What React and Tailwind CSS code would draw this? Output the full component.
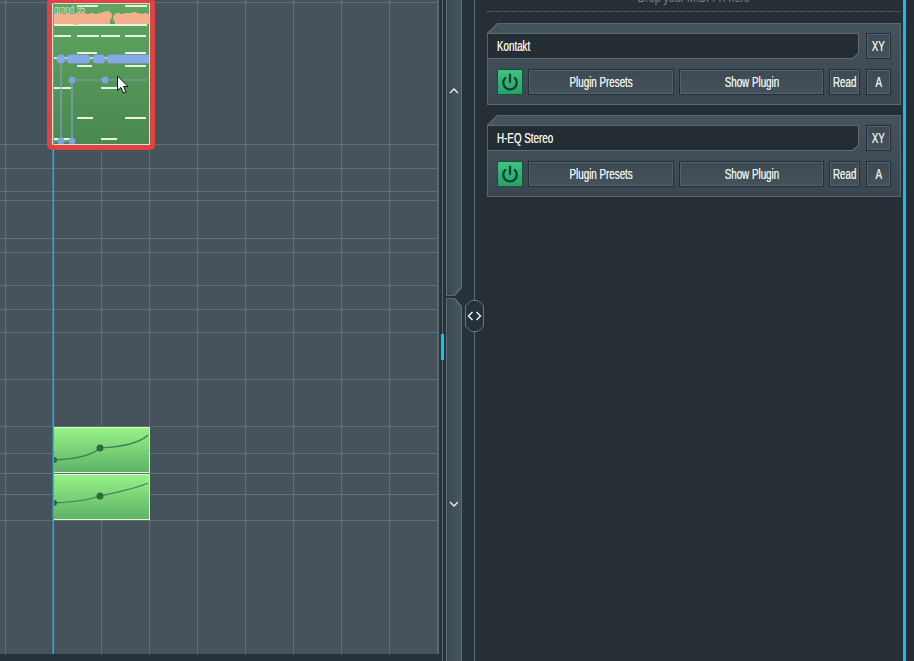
import React from 'react';
import { Power } from 'lucide-react';

const vLines = [5, 101, 149, 197, 245, 293, 341, 389];
const hLines = [2, 144, 168, 191, 200, 238, 252, 285, 309, 332, 379, 426, 453, 473, 494, 520];

const notes = [
  [24, 45, 1], [72, 94, 1], [1, 94, 20], [1, 18, 31], [24, 46, 31], [48, 67, 31], [72, 93, 31],
  [24, 44, 48], [72, 93, 48], [24, 39, 61], [72, 93, 61], [1, 18, 83], [48, 64, 83],
  [24, 40, 113], [72, 93, 113], [1, 18, 134], [48, 64, 134],
];
const peachBlobs = [
  [3, 15, 5], [7, 14, 5], [11, 15, 5], [15, 14, 5], [19, 15, 5], [23, 15, 6], [27, 14, 5], [31, 14, 5], [35, 15, 5],
  [39, 14, 5], [43, 15, 5], [47, 14, 5], [51, 13, 5], [54, 12, 5], [65, 14, 5], [69, 15, 5], [73, 14, 5], [77, 14, 5],
  [81, 13, 5], [85, 14, 5], [89, 15, 5], [92, 14, 5],
];
const blueDots = [8, 18, 21, 25, 29, 33, 44, 48, 58, 62, 66, 70, 74, 78, 82, 86, 90, 94];

const GridLines = () => (
  <svg className="absolute inset-0" width="439" height="654">
    {vLines.map(x => <line key={x} x1={x + 0.5} y1="0" x2={x + 0.5} y2="654" stroke="#616e77" />)}
    {hLines.map(y => <line key={y} x1="0" y1={y + 0.5} x2="437" y2={y + 0.5} stroke="#616e77" />)}
  </svg>
);

const PatternClip = () => (
  <div className="absolute left-[47px] top-[-2px] h-[152px] w-[108px] rounded-[5px] border-[5px] border-[#e04343]">
    <div className="relative h-full w-full overflow-hidden border border-[#d5e6cf] bg-gradient-to-b from-[#5fa663] to-[#4a884f]">
      <svg className="absolute left-0 top-0" width="96" height="140">
        {notes.map(([a, b, y], i) => <rect key={i} x={a} y={y} width={b - a} height="2" fill="#e8f4e0" />)}
        <rect x="0" y="10" width="57" height="10" fill="#f4b08c" />
        <rect x="62" y="10" width="34" height="10" fill="#f4b08c" />
        {peachBlobs.map(([x, y, r]) => <circle key={x} cx={x} cy={y} r={r} fill="#f4b08c" />)}
        <rect x="1" y="53" width="94" height="2" fill="#d6e9d0" />
        <path d="M8 55V137M19 76V137" fill="none" stroke="#7fa4c9" strokeWidth="2" opacity="0.6" />
        <path d="M19 76H95" fill="none" stroke="#7fa4c9" strokeWidth="2" opacity="0.4" />
        <path d="M0 137H19" stroke="#7fa4c9" strokeWidth="2" opacity="0.6" />
        {blueDots.map(x => <circle key={x} cx={x} cy="55" r="4.5" fill="#86a9e8" />)}
        <circle cx="19" cy="76" r="3.5" fill="#7fa3dd" />
        <circle cx="52" cy="76" r="3.5" fill="#7fa3dd" />
        <circle cx="8" cy="137" r="3.5" fill="#7fa3dd" />
        <circle cx="19" cy="137" r="3.5" fill="#7fa3dd" />
      </svg>
      <span className="absolute left-[1px] top-0 inline-block origin-left scale-x-[0.72] whitespace-nowrap text-[11px] leading-[11px] text-[#c9e3c2]">grand 95</span>
    </div>
  </div>
);

const AutoClip = ({ top, d, dot, start }) => (
  <div className={`absolute left-[53px] h-[46px] w-[97px] border border-[#d9f5cf] bg-gradient-to-b from-[#97f287] to-[#5fb366] ${top}`}>
    <svg className="absolute left-0 top-0" width="95" height="44">
      <path d={d} fill="none" stroke="#3f8050" strokeWidth="1.3" />
      <circle cx="46" cy={dot} r="3.5" fill="#2f6a3e" />
      <circle cx="0" cy={start} r="3" fill="#2f6a3e" />
    </svg>
  </div>
);

const Narrow = ({ className = '', children }) => (
  <span className={`inline-block scale-x-[0.7] whitespace-nowrap [text-shadow:0_0_0.6px_#e8ece6] ${className}`}>{children}</span>
);

const Button = ({ className = '', children }) => (
  <button className={`flex h-[26px] items-center justify-center border border-[#262e35] bg-gradient-to-b from-[#3d4a53] to-[#45525b] text-[14px] text-[#e8ece6] shadow-[inset_0_0_0_1px_#55626b] ${className}`}>
    <Narrow>{children}</Narrow>
  </button>
);

const PluginCard = ({ name }) => (
  <div className="h-[82px] w-[414px] bg-[#5a6770] p-px [clip-path:polygon(10px_0,100%_0,100%_100%,0_100%,0_10px)]">
    <div className="h-full bg-gradient-to-b from-[#45535c] to-[#3b4750] pt-[9px] [clip-path:polygon(10px_0,100%_0,100%_100%,0_100%,0_10px)]">
      <div className="flex items-center">
        <div className="h-[26px] w-[371px] bg-[#5e6b73] py-px pr-px [clip-path:polygon(0_0,100%_0,100%_20px,calc(100%-6px)_100%,0_100%)]">
          <div className="flex h-full items-center bg-[#252d34] pl-[9px] text-[14px] text-[#ecefe8] [clip-path:polygon(0_0,100%_0,100%_19px,calc(100%-6px)_100%,0_100%)]">
            <Narrow className="origin-left">{name}</Narrow>
          </div>
        </div>
        <Button className="ml-[7px] w-[25px]">XY</Button>
      </div>
      <div className="mt-[10px] flex items-center pl-[9px]">
        <div className="flex h-[26px] w-[26px] items-center justify-center border border-[#1b4d3b] bg-gradient-to-b from-[#3bc583] to-[#27a06a]">
          <Power size={18} strokeWidth={3} color="#0f3d2a" />
        </div>
        <Button className="ml-[5px] w-[146px]">Plugin Presets</Button>
        <Button className="ml-[5px] w-[145px]">Show Plugin</Button>
        <Button className="ml-[5px] w-[31px]">Read</Button>
        <Button className="ml-[6px] w-[25px]">A</Button>
      </div>
    </div>
  </div>
);

const App = () => {
  return (
    <div className="flex h-[661px] w-[914px] overflow-hidden bg-[#27313a] font-['Liberation_Sans',sans-serif]">
      {/* arrangement canvas */}
      <div className="relative h-[654px] w-[439px] shrink-0 overflow-hidden border-r-2 border-[#5c6870] bg-[#46535c]">
        <GridLines />
        <PatternClip />
        <AutoClip top="top-[427px]" d="M0 32 C20 31 38 28 46 20 C65 19 85 16 94 7" dot="20" start="32" />
        <AutoClip top="top-[474px]" d="M0 28 C20 27 35 25 46 21 C65 17 80 14 94 8" dot="21" start="28" />
        <div className="absolute bottom-0 left-[53px] top-[150px] w-px bg-[#1fb6e0] shadow-[-1px_0_0_#2f7f9c]" />
        <div className="absolute left-[53px] top-[3px] h-[142px] w-px bg-[#1fb6e0]" />
        <svg className="absolute left-[116px] top-[75px]" width="14" height="20">
          <path d="M1.5 1V15.5L5 12.5L7.5 18L10 17L7.5 11.5H12Z" fill="#fff" stroke="#111" />
        </svg>
      </div>

      {/* scroll strip */}
      <div className="relative h-full w-[35px] shrink-0">
        <div className="absolute bottom-0 left-[3px] top-0 w-px bg-[#5c6870]" />
        <div className="absolute left-[2px] top-[334px] h-[26px] w-[3px] bg-[#12c4f2]" />
        <div className="absolute left-[7px] top-0 flex h-full w-[16px] flex-col gap-[2px]">
          <div className="relative h-[296px] bg-[#5f6c75] px-px pb-px [clip-path:polygon(0_0,100%_0,100%_calc(100%-8px),calc(100%-7px)_100%,0_100%)]">
            <div className="flex h-full items-start justify-center bg-gradient-to-r from-[#3b4952] to-[#47555e] pt-[88px] [clip-path:polygon(0_0,100%_0,100%_calc(100%-8px),calc(100%-7px)_100%,0_100%)]">
              <svg width="10" height="6"><path d="M1 5L5 1L9 5" fill="none" stroke="#f0f4f4" strokeWidth="1.3" /></svg>
            </div>
          </div>
          <div className="relative flex-1 bg-[#5f6c75] px-px pt-px [clip-path:polygon(0_0,calc(100%-7px)_0,100%_8px,100%_100%,0_100%)]">
            <div className="flex h-full items-start justify-center bg-gradient-to-r from-[#3b4952] to-[#47555e] pt-[202px] [clip-path:polygon(0_0,calc(100%-7px)_0,100%_8px,100%_100%,0_100%)]">
              <svg width="10" height="6"><path d="M1 1L5 5L9 1" fill="none" stroke="#f0f4f4" strokeWidth="1.3" /></svg>
            </div>
          </div>
        </div>
      </div>

      {/* plugin rack */}
      <div className="relative flex h-full w-[429px] shrink-0 flex-col gap-[10px] border-l border-[#5f6c75] bg-[#272f36] pl-[12px]">
        <div className="-mt-[8px] mb-px flex h-[20px] w-[414px] items-start justify-center border-b border-dotted border-[#66727a] text-[12px] leading-[12px] text-[#78838a]">
          <span className="inline-block scale-x-[0.88] whitespace-nowrap">Drop your MIDI FX here</span>
        </div>
        <PluginCard name="Kontakt" />
        <PluginCard name="H-EQ Stereo" />
        <svg className="absolute -left-[10px] top-[300px]" width="19" height="32">
          <path d="M6 .5H13L18.5 6V26L13 31.5H6L.5 26V6Z" fill="#27313a" stroke="#6a767e" />
          <path d="M7.5 12L3.5 16L7.5 20M11.5 12L15.5 16L11.5 20" fill="none" stroke="#f4f7f7" strokeWidth="1.4" />
        </svg>
      </div>

      <div className="w-[3px] shrink-0 bg-[#12bdea]" />
      <div className="flex-1 bg-[#262d33]" />
    </div>
  );
};

export default App;
